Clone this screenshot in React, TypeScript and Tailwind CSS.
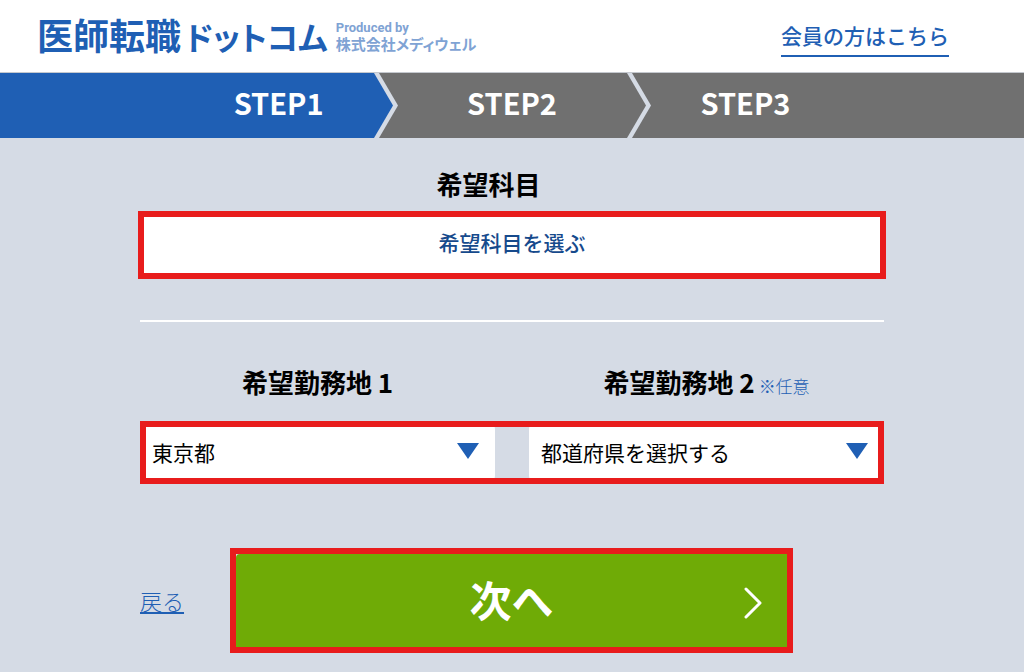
import React, { useState } from "react";

const PREFECTURES = ["東京都", "神奈川県", "埼玉県", "千葉県", "大阪府", "京都府", "愛知県", "福岡県"];

// Arrow shaped divider between two steps
const StepDivider = ({ active }: { active?: boolean }) => (
  <svg
    className="h-full w-6 shrink-0 bg-[#707070]"
    viewBox="0 0 24 65"
    preserveAspectRatio="none"
    aria-hidden="true"
  >
    <polygon points="0,0 5,0 24,32.5 5,65 0,65" fill="#d5dbe5" />
    <polygon points="0,0 19,32.5 0,65" fill={active ? "#1f5fb4" : "#707070"} />
  </svg>
);

interface PrefectureSelectProps {
  id: string;
  value: string;
  onChange: (value: string) => void;
}

// Select and arrow share one grid cell
const PrefectureSelect = ({ id, value, onChange }: PrefectureSelectProps) => (
  <div className="grid items-center">
    <select
      id={id}
      value={value}
      onChange={(e) => onChange(e.target.value)}
      className="col-start-1 row-start-1 h-[63px] w-full appearance-none rounded-lg bg-white pr-12 pl-3 text-[21px] text-black"
    >
      <option value="">都道府県を選択する</option>
      {PREFECTURES.map((name) => (
        <option key={name} value={name}>
          {name}
        </option>
      ))}
    </select>
    <svg
      className="pointer-events-none col-start-1 row-start-1 mr-4 mb-1 h-4 w-[22px] justify-self-end"
      viewBox="0 0 22 16"
      aria-hidden="true"
    >
      <polygon points="0,0 22,0 11,16" fill="#1f5fb4" />
    </svg>
  </div>
);

const App = () => {
  const [area1, setArea1] = useState("東京都");
  const [area2, setArea2] = useState("");

  return (
    <div className="min-h-screen bg-[#d5dbe5] font-['Noto_Sans_CJK_JP',sans-serif] text-black">
      <header className="flex h-[73px] items-center justify-between border-b border-[#c4c8ce] bg-white pr-[75px] pl-[37px]">
        <div className="flex items-center gap-2 [font-feature-settings:'palt']">
          <span className="pb-0.5 text-[36px] leading-10 font-bold whitespace-nowrap text-[#1f5fb4]">
            医師転職<span className="pl-1 text-[32px]">ドットコム</span>
          </span>
          <span className="flex flex-col font-bold whitespace-nowrap text-[#7fa3d4]">
            <span className="font-['Roboto',sans-serif] text-[13px] leading-4">Produced by</span>
            <span className="text-[15px] leading-4">株式会社メディウェル</span>
          </span>
        </div>
        <a
          href="#"
          className="mt-1 border-b-2 border-[#1f5fb4] pb-1 text-[21px] leading-8 font-medium whitespace-nowrap text-[#1f5fb4]"
        >
          会員の方はこちら
        </a>
      </header>

      {/* Steps */}
      <ol className="flex h-[65px] text-[29px] leading-[58px] font-bold text-white">
        <li className="flex-1 bg-[#1f5fb4] pr-[50px] text-right">STEP1</li>
        <StepDivider active />
        <li className="w-[229px] bg-[#707070] text-center">STEP2</li>
        <StepDivider />
        <li className="flex-1 bg-[#707070] pl-[50px]">STEP3</li>
      </ol>

      <form className="mx-auto max-w-[744px] pt-[26px] pb-4" onSubmit={(e) => e.preventDefault()}>
        <h2 id="subject" className="pr-[47px] text-center text-[26px] leading-10 font-bold">
          希望科目
        </h2>
        <button
          type="button"
          aria-describedby="subject"
          className="mt-[9px] block h-16 w-full bg-white pb-1 text-[21px] font-medium text-[#164a8c] outline-6 -outline-offset-4 outline-[#e81c1c]"
        >
          希望科目を選ぶ
        </button>

        <hr className="mt-[43px] border-t-2 border-white" />

        <div className="mt-10 grid grid-cols-2 gap-[34px] text-center text-[26px] leading-10 font-bold">
          <label htmlFor="area1">希望勤務地 1</label>
          <label htmlFor="area2">
            希望勤務地 2
            <span className="pl-1 text-[17px] leading-none font-light text-[#1f5fb4]">※任意</span>
          </label>
        </div>
        <div className="mt-[19px] grid grid-cols-2 gap-[34px] outline-6 -outline-offset-6 outline-[#e81c1c]">
          <PrefectureSelect id="area1" value={area1} onChange={setArea1} />
          <PrefectureSelect id="area2" value={area2} onChange={setArea2} />
        </div>

        <div className="mt-16 flex items-center gap-[46px]">
          <a href="#" className="text-[22px] font-light whitespace-nowrap text-[#1f5fb4] underline underline-offset-2">
            戻る
          </a>
          <div className="w-[563px] border-6 border-[#e81c1c]">
            <button
              type="submit"
              className="grid h-[93px] w-full grid-cols-[1fr_auto_1fr] items-center rounded-tl-sm bg-[#6fab06] px-[25px] text-[42px] font-bold text-white"
            >
              <span className="col-start-2 pb-1">次へ</span>
              <svg
                className="mt-1 h-8 w-[18px] justify-self-end"
                viewBox="0 0 18 32"
                fill="none"
                stroke="currentColor"
                strokeWidth="3"
                strokeLinecap="round"
                strokeLinejoin="round"
                aria-hidden="true"
              >
                <path d="M2 2 16 16 2 30" />
              </svg>
            </button>
          </div>
        </div>
      </form>
    </div>
  );
};

export default App;
